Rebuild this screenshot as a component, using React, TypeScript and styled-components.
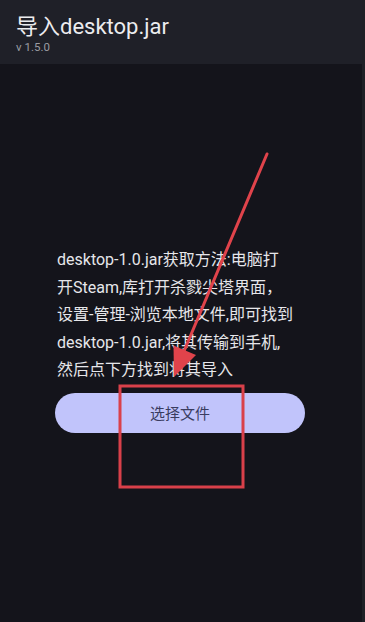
import React from 'react'
import styled, { createGlobalStyle } from 'styled-components'

const GlobalStyle = createGlobalStyle`
  html, body {
    margin: 0;
    padding: 0;
    background: #14141b;
  }
  body {
    font-family: Roboto, "Noto Sans CJK SC", sans-serif;
  }
`

const lines = [
  'desktop-1.0.jar获取方法:电脑打',
  '开Steam,库打开杀戮尖塔界面，',
  '设置-管理-浏览本地文件,即可找到',
  'desktop-1.0.jar,将其传输到手机,',
  '然后点下方找到将其导入',
]

export default function App() {
  return (
    <>
      <GlobalStyle />
      <Screen>
        <Header>
          <Title>导入desktop.jar</Title>
          <Version>v 1.5.0</Version>
        </Header>
        <Body>
          <Hint>
            {lines.map((l) => (
              <span key={l}>{l}</span>
            ))}
          </Hint>
          <PickButton>选择文件</PickButton>
        </Body>
        <Overlay viewBox="0 0 365 622" width="365" height="622">
          <line x1="267" y1="154" x2="182" y2="356" stroke="#e0434b" strokeWidth="3" strokeLinecap="round" />
          <polygon points="174,377 173.5,345.5 196,355" fill="#e0434b" />
          <rect x="120" y="386" width="123" height="101" fill="none" stroke="#d9404a" strokeWidth="3" />
        </Overlay>
      </Screen>
    </>
  )
}

const Screen = styled.div`
  position: relative;
  width: 362px;
  height: 622px;
  display: flex;
  flex-direction: column;
  background: #14141b;
  border-right: 3px solid #1f2026;
  overflow: hidden;
`

const Header = styled.div`
  height: 64px;
  box-sizing: border-box;
  padding: 13px 16px 0;
  background: #1f2028;
  display: flex;
  flex-direction: column;
`

const Title = styled.div`
  font-size: 22px;
  line-height: 27px;
  color: #ececef;
`

const Version = styled.div`
  font-size: 11.5px;
  line-height: 14px;
  color: #9b9ca2;
`

const Body = styled.div`
  flex: 1;
  display: flex;
  flex-direction: column;
  padding: 182px 0 0 55px;
`

const Hint = styled.div`
  display: flex;
  flex-direction: column;
  padding-left: 2px;
  font-size: 16px;
  line-height: 27.5px;
  color: #e6e6ea;
  white-space: nowrap;
`

const PickButton = styled.button`
  margin-top: 9px;
  width: 250px;
  height: 40px;
  border: none;
  border-radius: 20px;
  background: #c1c4fb;
  color: #3a3c5f;
  font-family: Roboto, "Noto Sans CJK SC", sans-serif;
  font-size: 15px;
  padding: 0;
`

const Overlay = styled.svg`
  position: absolute;
  left: 0;
  top: 0;
  pointer-events: none;
`
